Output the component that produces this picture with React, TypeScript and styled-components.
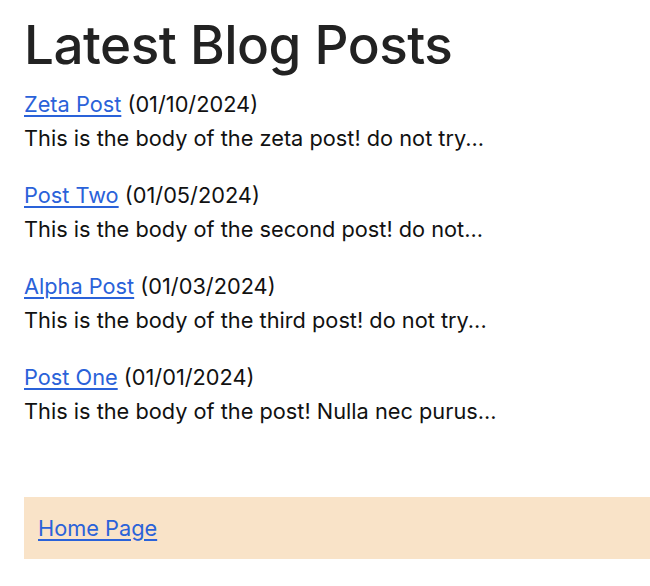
import React from 'react'
import styled, { createGlobalStyle } from 'styled-components'

const GlobalStyle = createGlobalStyle`
  body {
    margin: 0;
    background: #ffffff;
    font-family: Inter, "Noto Sans", sans-serif;
    color: #1d1d1f;
  }
`

const Page = styled.div`
  padding: 13px 0 0 24px;
`

const Title = styled.h1`
  margin: 0 0 10px 0;
  font-size: 53px;
  font-weight: 500;
  line-height: 64px;
  letter-spacing: -0.5px;
  color: #222;
`

const PostList = styled.div`
  display: flex;
  flex-direction: column;
  gap: 23px;
`

const Post = styled.article`
  font-size: 21.75px;
  line-height: 34px;
  color: #111;
`

const PostLink = styled.a`
  color: #2a62d9;
  text-decoration: underline;
  text-underline-offset: 3px;
`

const Footer = styled.footer`
  margin-top: 69px;
  background: #f9e3c8;
  height: 62px;
  display: flex;
  align-items: center;
  padding-left: 14px;
  font-size: 21.75px;
`

interface PostData {
  title: string
  date: string
  body: string
}

const posts: PostData[] = [
  { title: 'Zeta Post', date: '01/10/2024', body: 'This is the body of the zeta post! do not try...' },
  { title: 'Post Two', date: '01/05/2024', body: 'This is the body of the second post! do not...' },
  { title: 'Alpha Post', date: '01/03/2024', body: 'This is the body of the third post! do not try...' },
  { title: 'Post One', date: '01/01/2024', body: 'This is the body of the post! Nulla nec purus...' },
]

export default function App() {
  return (
    <>
      <GlobalStyle />
      <Page>
        <Title>Latest Blog Posts</Title>
        <PostList>
          {posts.map((p) => (
            <Post key={p.title}>
              <div>
                <PostLink href="#">{p.title}</PostLink> ({p.date})
              </div>
              <div>{p.body}</div>
            </Post>
          ))}
        </PostList>
        <Footer>
          <PostLink href="#">Home Page</PostLink>
        </Footer>
      </Page>
    </>
  )
}
